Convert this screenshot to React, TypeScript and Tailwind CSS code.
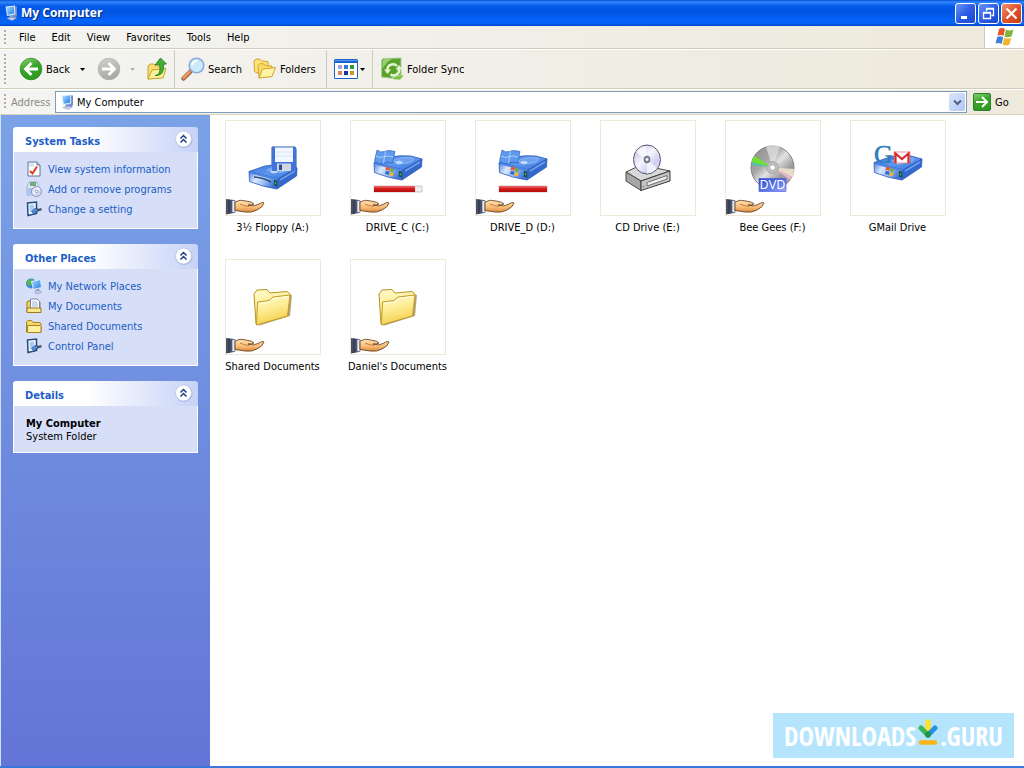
import React, { useState } from 'react';
import clsx from 'clsx';

type IconProps = { className?: string };

const menuItems = ['File', 'Edit', 'View', 'Favorites', 'Tools', 'Help'];

// Gradients shared by the drawings below
function Gradients() {
  return (
    <svg className="absolute h-0 w-0" aria-hidden="true">
      <defs>
        <linearGradient id="driveTop" x1="0" y1="0" x2="1" y2="1">
          <stop offset="0" stopColor="#3f78dc" />
          <stop offset="0.5" stopColor="#5c96ee" />
          <stop offset="1" stopColor="#3a74da" />
        </linearGradient>
        <linearGradient id="driveFront" x1="0" y1="0" x2="1" y2="0.4">
          <stop offset="0" stopColor="#4a7edc" />
          <stop offset="0.35" stopColor="#dbe8fd" />
          <stop offset="0.65" stopColor="#9cc0f6" />
          <stop offset="1" stopColor="#3f74d6" />
        </linearGradient>
        <linearGradient id="folder" x1="0" y1="0" x2="0.3" y2="1">
          <stop offset="0" stopColor="#fffbd0" />
          <stop offset="0.5" stopColor="#feee98" />
          <stop offset="1" stopColor="#f5cf4c" />
        </linearGradient>
        <linearGradient id="green" x1="0" y1="0" x2="0.4" y2="1">
          <stop offset="0" stopColor="#8fd67c" />
          <stop offset="0.5" stopColor="#3aa52c" />
          <stop offset="1" stopColor="#2f9a20" />
        </linearGradient>
        <linearGradient id="gray" x1="0" y1="0" x2="0.4" y2="1">
          <stop offset="0" stopColor="#d2d2d0" />
          <stop offset="1" stopColor="#a8a8a6" />
        </linearGradient>
        <linearGradient id="screen" x1="0" y1="0" x2="1" y2="1">
          <stop offset="0" stopColor="#a8dcff" />
          <stop offset="1" stopColor="#1f7be6" />
        </linearGradient>
        <linearGradient id="skin" x1="0" y1="0" x2="0" y2="1">
          <stop offset="0" stopColor="#ffe2b4" />
          <stop offset="0.6" stopColor="#f8bb74" />
          <stop offset="1" stopColor="#d8883a" />
        </linearGradient>
        <linearGradient id="usage" x1="0" y1="0" x2="0" y2="1">
          <stop offset="0" stopColor="#ee6c6c" />
          <stop offset="0.5" stopColor="#d01818" />
          <stop offset="1" stopColor="#b80c0c" />
        </linearGradient>
        <linearGradient id="cd" x1="0" y1="0" x2="1" y2="1">
          <stop offset="0" stopColor="#b9b9e4" />
          <stop offset="0.45" stopColor="#f6f6ff" />
          <stop offset="0.7" stopColor="#cfcff4" />
          <stop offset="1" stopColor="#e9e4fb" />
        </linearGradient>
        <linearGradient id="dvd" x1="0" y1="0" x2="1" y2="1">
          <stop offset="0" stopColor="#8c8c8c" />
          <stop offset="0.35" stopColor="#a5a5a5" />
          <stop offset="0.5" stopColor="#e2e2e2" />
          <stop offset="0.7" stopColor="#9c9c9c" />
          <stop offset="1" stopColor="#b0b0b0" />
        </linearGradient>
        <linearGradient id="dvdLabel" x1="0" y1="0" x2="1" y2="1">
          <stop offset="0" stopColor="#2f48d0" />
          <stop offset="0.6" stopColor="#5f78ea" />
          <stop offset="1" stopColor="#9cb0fa" />
        </linearGradient>
      </defs>
    </svg>
  );
}

function ComputerIcon({ className }: IconProps) {
  return (
    <svg className={className} viewBox="0 0 16 16" aria-hidden="true">
      <path d="M4 13.500 L9 11.500 L13.500 13 L9 15.500 Z" fill="#d8d4ea" stroke="#8f92bc" strokeWidth="0.600" />
      <path d="M11 1 L14 1.500 V11 L12 13 L10 12 Z" fill="#6f8cc4" />
      <path d="M6.500 10 L10 10 L10.500 13 L6.500 13.300 Z" fill="#8c9ccc" />
      <path d="M2.500 1.500 L12 0.500 L12.300 9.500 L4 11 Z" fill="#d8ebfc" />
      <path d="M3.500 2.500 L11 1.600 L11.200 8.600 L4.800 9.800 Z" fill="url(#screen)" />
    </svg>
  );
}

function WindowsFlag({ className }: IconProps) {
  return (
    <svg className={className} viewBox="0 0 20 20" aria-hidden="true">
      <path d="M4 2 Q7 0 10 2 L8.500 9 Q5.500 7 2.500 8.800 Z" fill="#e8562a" />
      <path d="M11 2.500 Q14 4.500 18.500 2.500 L16.500 9.500 Q12.500 11.200 9.500 9.400 Z" fill="#7db53c" />
      <path d="M2.200 10 Q5.200 8.200 8.200 10.200 L6.600 17 Q3.600 15 0.500 16.600 Z" fill="#3f7fd8" />
      <path d="M9.200 10.700 Q12.500 12.500 16.200 10.700 L14.500 17.500 Q11 19.300 7.600 17.500 Z" fill="#f2b62c" />
    </svg>
  );
}

function CircleArrow({ className, forward }: IconProps & { forward?: boolean }) {
  return (
    <svg className={className} viewBox="0 0 24 24" aria-hidden="true">
      <circle cx="12" cy="12" r="10.800" fill={forward ? 'url(#gray)' : 'url(#green)'} stroke={forward ? '#b0b0ae' : '#2c8a20'} strokeWidth="0.800" />
      <path
        d={forward ? 'M5 12 H17 M11.500 6 L17.500 12 L11.500 18' : 'M19 12 H7 M12.500 6 L6.500 12 L12.500 18'}
        fill="none"
        stroke="#fff"
        strokeWidth="2.800"
      />
    </svg>
  );
}

function UpFolderIcon({ className }: IconProps) {
  return (
    <svg className={className} viewBox="0 0 22 24" aria-hidden="true">
      <path d="M2 22 L2 9 L4 7 L8 7 L10 9 L17 9 L17 20 Z" fill="#f8de74" stroke="#c9a227" />
      <path d="M2 22 L6 13 L20 11.500 L17 21 Z" fill="#fdf09c" stroke="#c9a227" />
      <path d="M9 18.500 C14 18 14.500 13 13.500 7.500 L9 8 L14.500 1 L20.500 7 L17.500 7.200 C18 13 17 19 9 18.500 Z" fill="#3fb034" stroke="#1f7a1a" strokeWidth="0.800" />
    </svg>
  );
}

function SearchIcon({ className }: IconProps) {
  return (
    <svg className={className} viewBox="0 0 24 24" aria-hidden="true">
      <path d="M2.500 21.500 L9 15" stroke="#a2603a" strokeWidth="4.500" strokeLinecap="round" />
      <path d="M2.500 21 L8.500 15" stroke="#e79a62" strokeWidth="2.500" strokeLinecap="round" />
      <circle cx="15.500" cy="8.500" r="7.300" fill="#cdeafc" stroke="#8fabd8" strokeWidth="1.600" />
      <path d="M11 8 Q12 4 16 4" stroke="#fff" strokeWidth="2" fill="none" />
    </svg>
  );
}

function FoldersIcon({ className }: IconProps) {
  return (
    <svg className={className} viewBox="0 0 24 24" aria-hidden="true">
      <path d="M1.500 14.500 L1 4 L3 2 L7 2.200 L8.500 4 L15 4.500 L15 13 L4 16 Z" fill="#fbe27a" stroke="#d4a52c" />
      <path d="M6 21 L5 8.500 L7 6.500 L11 7 L12.500 8.500 L19 9 L19 19 Z" fill="#f9da66" stroke="#d4a52c" />
      <path d="M6 21 L9.500 12 L22.500 10.500 L19 19.500 Z" fill="#fdf2a6" stroke="#d4a52c" />
    </svg>
  );
}

function ViewsIcon({ className }: IconProps) {
  const dots = ['#a8a0d8', '#2c78d8', '#2f9a3c', '#e8825c', '#123c9c', '#c89a2c'];
  return (
    <svg className={className} viewBox="0 0 24 20" aria-hidden="true">
      <rect x="0" y="0" width="24" height="20" rx="1.500" fill="#1c62cc" />
      <rect x="1" y="4" width="22" height="15" fill="#fff" />
      <rect x="1" y="1" width="22" height="1" fill="#5c9cf0" />
      {dots.map((fill, i) => (
        <rect key={fill} x={4 + (i % 3) * 6} y={i < 3 ? 6 : 12} width="4" height="4" fill={fill} />
      ))}
    </svg>
  );
}

function FolderSyncIcon({ className }: IconProps) {
  return (
    <svg className={className} viewBox="0 0 24 24" aria-hidden="true">
      <path d="M3 1.500 L21 1 V20 L19 22 L1.500 20 V4 Z" fill="#57a428" stroke="#a9cc98" />
      <path d="M4 2 H12 Q6 5 2.500 12 V4 Z" fill="#9ccf70" />
      <path d="M7.500 13 A5.500 5.500 0 0 1 17 9" fill="none" stroke="#e4f4d6" strokeWidth="2.500" />
      <path d="M19 12 A5.500 5.500 0 0 1 10.500 17.500" fill="none" stroke="#e4f4d6" strokeWidth="2.500" />
      <path d="M4 12.500 H11 L7.500 17 Z M15.500 12.500 H22.500 L19 8 Z" fill="#e4f4d6" />
      <path d="M13 20 L22 17.500 L23.500 19 L20 23 L13 22.500 Z" fill="#7fc04c" stroke="#dff0d2" strokeWidth="0.700" />
    </svg>
  );
}

function Caret({ className }: IconProps) {
  return (
    <svg className={clsx('h-[3px] w-[5px]', className)} viewBox="0 0 5 3" aria-hidden="true">
      <path d="M0 0 H5 L2.500 3 Z" fill="currentColor" />
    </svg>
  );
}

function CollapseIcon() {
  return (
    <svg className="h-[19px] w-[19px]" viewBox="0 0 19 19" aria-hidden="true">
      <circle cx="10" cy="9.500" r="8.500" fill="#a4b0d8" />
      <circle cx="9.500" cy="9" r="8" fill="#fff" stroke="#c3cce8" />
      <path d="M6.500 8.500 L9.500 5.500 L12.500 8.500 M6.500 12.500 L9.500 9.500 L12.500 12.500" fill="none" stroke="#1a3e8c" strokeWidth="1.500" />
    </svg>
  );
}

function SystemInfoIcon({ className }: IconProps) {
  return (
    <svg className={className} viewBox="0 0 16 16" aria-hidden="true">
      <path d="M2 1 H11 L14 4 V15 H2 Z" fill="#fff" stroke="#5f7298" />
      <path d="M11 1 V4 H14" fill="#c8d4ea" stroke="#5f7298" />
      <path d="M4 10 L6.500 12.500 L11 5.500" fill="none" stroke="#dc3c1c" strokeWidth="2" />
      <path d="M3 3 H8 M3 5 H8" stroke="#b8c8e4" />
    </svg>
  );
}

function ProgramsIcon({ className }: IconProps) {
  return (
    <svg className={className} viewBox="0 0 16 16" aria-hidden="true">
      <path d="M1 6 L3 1 H11 L13 6 V14 H1 Z" fill="#dfe9f8" stroke="#8ba0c4" strokeWidth="0.800" />
      <rect x="4" y="1" width="6" height="4" fill="#6faa7c" />
      <rect x="2" y="7" width="6" height="6" fill="#a9c4ee" />
      <circle cx="10.500" cy="10.500" r="5" fill="url(#cd)" stroke="#7f86b0" strokeWidth="0.800" />
      <circle cx="10.500" cy="10.500" r="1.300" fill="#fff" stroke="#7f86b0" strokeWidth="0.800" />
    </svg>
  );
}

function SettingIcon({ className }: IconProps) {
  return (
    <svg className={className} viewBox="0 0 16 16" aria-hidden="true">
      <path d="M1.500 2 L10.500 1 V12.500 L2 14.500 Z" fill="#eef4fe" stroke="#274a80" strokeWidth="1.500" />
      <path d="M3.500 4 L8 3.500 V9 L4 11 Z" fill="#a8ccf6" />
      <path d="M5.500 10.500 L9 7.500 L12 8 V10.500 L10 11 L8.500 13.500 Z" fill="#4a90dc" stroke="#1f3c6c" strokeWidth="0.600" />
      <path d="M11 8 L15.500 7 V9.500 L11 10.500 Z" fill="#4a5468" />
    </svg>
  );
}

function NetworkIcon({ className }: IconProps) {
  return (
    <svg className={className} viewBox="0 0 16 16" aria-hidden="true">
      <circle cx="5" cy="5.500" r="5" fill="#3d86dc" />
      <path d="M1 3 Q4 0 7 1.500 L5 4 L6 7 L3 8 L1 6 Z" fill="#4fb848" />
      <path d="M5.500 3.500 L14.500 1.500 L15.500 9.500 L7.500 11.500 Z" fill="url(#screen)" stroke="#dce8f8" />
      <path d="M10 11.500 L13 10.500 L13.500 13 L10.500 13.500 Z" fill="#8c98c4" />
      <ellipse cx="12" cy="14" rx="3.500" ry="1.500" fill="#c8cce8" stroke="#7b84b4" strokeWidth="0.500" />
    </svg>
  );
}

function MyDocumentsIcon({ className }: IconProps) {
  return (
    <svg className={className} viewBox="0 0 16 16" aria-hidden="true">
      <path d="M1 14 V4 L2 3 H6 L14 4 V14 Z" fill="#f4d260" stroke="#9a7a1c" />
      <path d="M4.500 1 H11 L13.500 3.500 V12 H4.500 Z" fill="#fff" stroke="#7088b0" />
      <path d="M6 4 H11 M6 6 H12 M6 8 H12" stroke="#9cb4d8" />
      <path d="M1 14.500 V10 H15 V14.500 Z" fill="#fae78e" stroke="#9a7a1c" />
    </svg>
  );
}

function SmallFolderIcon({ className }: IconProps) {
  return (
    <svg className={className} viewBox="0 0 16 16" aria-hidden="true">
      <path d="M0.500 14 V4 L2 2.500 H5.500 L7 4.500 H14 L15 6 V14 Z" fill="#f6d868" stroke="#a8841c" />
      <path d="M1.500 14.500 V7.500 H14 L15 8.500 V14.500 Z" fill="#fdf09c" stroke="#a8841c" />
    </svg>
  );
}

// Blue external drive, drawn in the lower half of a 48px square
function DriveBody({ logo }: { logo?: boolean }) {
  return (
    <g>
      <path d="M0 18.500 L16 13 Q26 11 37 12 L48 15 L29 26 Z" fill="url(#driveTop)" stroke="#2a5cba" strokeWidth="0.800" />
      <path d="M18 17 Q27 12 39 14 Q41 17 34 19 Q25 21 18 17 Z" fill="#6ea2f0" stroke="#9cc2f8" strokeWidth="0.700" />
      <ellipse cx="25" cy="18.500" rx="3.500" ry="1.800" fill="#bcd8fb" />
      <path d="M0 18.500 L29 26 L28 36 Q14 34 0.500 28.500 Z" fill="url(#driveFront)" stroke="#2a5cba" strokeWidth="0.800" />
      <path d="M1 19.500 L28.500 26.500" stroke="#4f86e6" strokeWidth="2" />
      <path d="M29 26 L48 15 L47.500 23 L28 36 Z" fill="#3468cc" stroke="#2a5cba" strokeWidth="0.800" />
      <path d="M31 27 L46 18" stroke="#6f9fee" strokeWidth="1.500" />
      <path d="M25 27 L28 27.800 V33.500 L25 32.500 Z" fill="#1c4a3c" />
      <rect x="25.800" y="29" width="1.400" height="2.500" fill="#3fae58" />
      {logo && (
        <g>
          <path d="M12 23.500 Q14 22 16 23.800 L15.500 27 Q13.500 25.500 11.500 26.500 Z" fill="#e8562a" />
          <path d="M16.500 24.100 Q18.500 25.500 20 24.500 L19.500 27.500 Q17.500 28.500 16 27.300 Z" fill="#6cae3c" />
          <path d="M11.500 27.500 Q13.500 26.300 15.400 27.800 L15 31 Q13 29.600 11 30.500 Z" fill="#3468d0" />
          <path d="M16 28.100 Q17.500 29.500 19.500 28.500 L19 31.800 Q17 32.800 15.500 31.400 Z" fill="#f2b62c" />
        </g>
      )}
    </g>
  );
}

function FloppyDriveIcon() {
  return (
    <>
      <path d="M23 3 H46 L47 5 V30 H23 Z" fill="#3f74da" stroke="#24509e" />
      <g transform="translate(0 9)">
        <DriveBody />
      </g>
      <path d="M23 3 H46 L47 5 V27 H23 Z" fill="#3f74da" />
      <rect x="26" y="3.500" width="18" height="14.500" fill="#f2f7ff" />
      <path d="M26 8 H44 M26 12 H44" stroke="#d8e6fa" />
      <rect x="28" y="19.500" width="14" height="7.500" fill="#d0d6e2" />
      <rect x="30" y="20.500" width="3" height="5.500" fill="#2c4f9c" />
      <path d="M5 33 Q14 33.500 22 38" stroke="#33507c" strokeWidth="1.600" fill="none" />
    </>
  );
}

function HardDriveIcon({ full }: { full?: boolean }) {
  return (
    <>
      <DriveBody logo />
      <path d="M3 6 Q7 9 10 7.500 Q14 5.500 21 7.500 L18.500 19 Q13 17 9 19.500 Q5 21 0.500 17 Z" fill="#5e9aee" stroke="#2c62b8" strokeWidth="0.700" />
      <path d="M11.500 7 L9.500 19.500 M2 12 Q6 14.500 9 13 Q13 11 19.500 13" stroke="#b4d2fa" strokeWidth="0.900" fill="none" />
      <rect x="0" y="42" width="48" height="6" fill="#f0eef0" stroke="#a8a8a8" strokeWidth="0.600" />
      <rect x="0" y="42" width={full ? 48 : 41} height="6" fill="url(#usage)" />
    </>
  );
}

function CdDriveIcon() {
  return (
    <>
      <path d="M2 28 L17 21 L46 27 L17 37 Z" fill="#d9d9d9" stroke="#4a4a4a" />
      <path d="M2 28 L17 37 V46.500 L2 37 Z" fill="#a6a6a6" stroke="#4a4a4a" />
      <path d="M17 37 L46 27 V37 L17 46.500 Z" fill="#c4c4c4" stroke="#3a3a3a" />
      <path d="M23 38.500 L43 31.500 V35 L23 42 Z" fill="#f0f0f0" stroke="#555" strokeWidth="0.800" />
      <circle cx="19.500" cy="42.500" r="0.800" fill="#3c9a3c" />
      <ellipse cx="23" cy="15.500" rx="13.500" ry="14.500" fill="url(#cd)" stroke="#55556a" />
      <path d="M23 15.500 L12 8 Q16 2 22 2 Z" fill="#fff" opacity="0.700" />
      <path d="M23 15.500 L33 24 Q29 29 23 29.500 Z" fill="#fff" opacity="0.700" />
      <ellipse cx="23" cy="15.500" rx="3" ry="3.500" fill="#8c8c9c" stroke="#55556a" strokeWidth="0.700" />
      <circle cx="23" cy="15.500" r="1.300" fill="#fff" />
    </>
  );
}

function DvdIcon() {
  return (
    <>
      <circle cx="23.500" cy="23.500" r="21.500" fill="url(#dvd)" stroke="#6c6c6c" strokeWidth="0.800" />
      <path d="M23.500 23.500 L3 18 Q3.500 14 5.500 12 Z" fill="#6fe22c" />
      <path d="M23.500 23.500 L2.500 21 L3 18 Z" fill="#4fc4a4" />
      <path d="M23.500 23.500 L17 3 Q24 0 31 3 Z" fill="#e6e6e6" opacity="0.700" />
      <path d="M23.500 23.500 L45 25 Q45 30 43 33 Z" fill="#e8dcc8" />
      <path d="M23.500 23.500 L43 33 L41 36 Z" fill="#e6b4c8" />
      <circle cx="23.500" cy="23.500" r="6" fill="#c0c0c0" stroke="#8a8a8a" strokeWidth="0.600" />
      <circle cx="23.500" cy="23.500" r="2.800" fill="#fff" stroke="#8a8a8a" strokeWidth="0.600" />
      <rect x="10" y="34.500" width="27" height="13" fill="url(#dvdLabel)" stroke="#3c54d8" strokeWidth="0.600" />
      <text x="23.500" y="45" textAnchor="middle" fill="#fff" className="font-['Liberation_Sans',sans-serif] text-[12px]">
        DVD
      </text>
    </>
  );
}

function GmailDriveIcon() {
  return (
    <>
      <DriveBody logo />
      <text x="0" y="19" fill="#2f7dbb" stroke="#2f7dbb" strokeWidth="0.600" className="font-['Liberation_Serif',serif] text-[26px]">
        G
      </text>
      <rect x="20" y="8" width="16" height="11" fill="#fff" stroke="#d8262c" strokeWidth="0.500" />
      <polyline points="21.500,19 21.500,9.500 28,15 34.500,9.500 34.500,19" fill="none" stroke="#d8262c" strokeWidth="2.200" />
    </>
  );
}

function LargeFolderIcon() {
  return (
    <>
      <path d="M9 43 L41 33 L43 12 L40 12 Z" fill="#7a6a30" opacity="0.600" />
      <path d="M7 41 L5 11 L8 7 L18 6.500 L21 10 L38 8.500 L41 11 L39 32 Z" fill="url(#folder)" stroke="#b89220" />
      <path d="M7.500 42 L8.500 19 L20 17.500 L24 14 L41 12 L38.500 33 Z" fill="url(#folder)" stroke="#c49c26" />
      <path d="M10 20.500 L20.500 19 L24.500 15.500 L39.500 13.500" fill="none" stroke="#fffde6" />
    </>
  );
}

function SharedHand() {
  return (
    <svg className="absolute bottom-0 left-0 h-[17px] w-[39px]" viewBox="0 0 39 17" aria-hidden="true">
      <path d="M0 1 L8 2 V15 L0 16.500 Z" fill="#4a5166" />
      <path d="M3 1.500 V16" stroke="#2b3142" />
      <path d="M6 2.500 H9 V14.500 H6 Z" fill="#e8ecf4" stroke="#55607c" strokeWidth="0.700" />
      <path d="M9 4 Q14 1 20 3 Q27 4 28 6 Q25 7.500 22 7 Q28 9 32 6.500 Q37 3.500 38 5 Q37 9 31 12 Q26 15 19 14 L9 12.500 Z" fill="url(#skin)" stroke="#5c3618" strokeWidth="0.800" />
      <path d="M14 6 Q18 8 23 8.500" stroke="#b4702c" strokeWidth="0.800" fill="none" />
    </svg>
  );
}

const drives = [
  { name: '3½ Floppy (A:)', icon: <FloppyDriveIcon />, shared: true },
  { name: 'DRIVE_C (C:)', icon: <HardDriveIcon />, shared: true },
  { name: 'DRIVE_D (D:)', icon: <HardDriveIcon full />, shared: true },
  { name: 'CD Drive (E:)', icon: <CdDriveIcon />, shared: false },
  { name: 'Bee Gees (F:)', icon: <DvdIcon />, shared: true },
  { name: 'GMail Drive', icon: <GmailDriveIcon />, shared: false },
  { name: 'Shared Documents', icon: <LargeFolderIcon />, shared: true },
  { name: "Daniel's Documents", icon: <LargeFolderIcon />, shared: true },
];

const systemTasks = [
  { label: 'View system information', Icon: SystemInfoIcon },
  { label: 'Add or remove programs', Icon: ProgramsIcon },
  { label: 'Change a setting', Icon: SettingIcon },
];

const otherPlaces = [
  { label: 'My Network Places', Icon: NetworkIcon },
  { label: 'My Documents', Icon: MyDocumentsIcon },
  { label: 'Shared Documents', Icon: SmallFolderIcon },
  { label: 'Control Panel', Icon: SettingIcon },
];

function Grip() {
  return <div className="my-1 ml-1 w-[2px] self-stretch bg-[repeating-linear-gradient(to_bottom,#b4b1a4_0_2px,transparent_2px_4px)]" />;
}

function Separator() {
  return <div className="w-px self-stretch bg-[#cdcabb]" />;
}

function Panel({ title, children }: { title: string; children: React.ReactNode }) {
  const [open, setOpen] = useState(true);

  return (
    <section>
      <header className="flex h-[25px] items-center justify-between rounded-t-[3px] bg-gradient-to-r from-white from-40% to-[#c6d3f7] pr-[5px] pl-3">
        <h2 className="pt-1 font-bold text-[#215dc6]">{title}</h2>
        <button aria-label={`Collapse ${title}`} onClick={() => setOpen(!open)}>
          <CollapseIcon />
        </button>
      </header>
      {open && <div className="border border-t-0 border-white bg-[#d6dff7]">{children}</div>}
    </section>
  );
}

function LinkList({ items }: { items: { label: string; Icon: (p: IconProps) => React.ReactNode }[] }) {
  return (
    <ul className="px-3 pt-[7px] pb-[9px]">
      {items.map(({ label, Icon }) => (
        <li key={label}>
          <a href="#" className="flex h-5 items-center gap-[6px] whitespace-nowrap text-[#215dc6] hover:underline">
            <Icon className="h-4 w-4 shrink-0" />
            {label}
          </a>
        </li>
      ))}
    </ul>
  );
}

function TitleButton({ label, close, children }: { label: string; close?: boolean; children: React.ReactNode }) {
  return (
    <button
      aria-label={label}
      className={clsx(
        'flex h-[21px] w-[21px] items-center justify-center rounded-[3px] border border-white',
        close
          ? 'bg-gradient-to-br from-[#f0906c] via-[#e0522c] to-[#c83c14]'
          : 'bg-gradient-to-br from-[#6c94f4] via-[#2c5ce4] to-[#1c48cc]'
      )}
    >
      <svg className="h-[15px] w-[15px]" viewBox="0 0 15 15" fill="none" stroke="#fff" aria-hidden="true">
        {children}
      </svg>
    </button>
  );
}

export default function App() {
  const [address, setAddress] = useState('My Computer');

  return (
    <div className="flex min-h-screen flex-col border-b-2 border-[#3a78dc] bg-white font-['Tahoma','DejaVu_Sans_Condensed','Noto_Sans',sans-serif] text-[11px] leading-[13px] text-black">
      <Gradients />

      {/* Title bar */}
      <header className="flex h-[26px] items-center bg-[linear-gradient(to_bottom,#0a50d8_0%,#2f86fc_8%,#0458e8_24%,#0256e4_50%,#0664fc_80%,#0462f6_90%,#0244c4_100%)] pr-[2px] pl-[3px]">
        <ComputerIcon className="h-4 w-4" />
        <h1 className="flex-1 pl-[2px] font-['Trebuchet_MS','Open_Sans',sans-serif] text-[12px] leading-4 font-bold text-white [text-shadow:1px_1px_1px_#0a2c80]">
          My Computer
        </h1>
        <div className="flex gap-[2px]">
          <TitleButton label="Minimize">
            <path d="M3 11.500 H9" strokeWidth="3" />
          </TitleButton>
          <TitleButton label="Restore">
            <path d="M5.500 5 V2.500 H12.500 V9.500 H10.500 M5 3 H13" strokeWidth="1.300" />
            <path d="M2.500 6.500 H9.500 V12.500 H2.500 Z M2 7 H10" strokeWidth="1.300" />
          </TitleButton>
          <TitleButton label="Close" close>
            <path d="M2.500 2.500 L12.500 12.500 M12.500 2.500 L2.500 12.500" strokeWidth="2.200" />
          </TitleButton>
        </div>
      </header>

      {/* Menu bar */}
      <nav className="flex h-[23px] items-center border-b border-[#d0ccbc] bg-gradient-to-r from-[#f4f4f2] to-[#ede9db]">
        <Grip />
        <div className="flex flex-1 pl-[5px]">
          {menuItems.map((item) => (
            <button key={item} className="px-2 hover:bg-[#316ac5] hover:text-white">
              {item}
            </button>
          ))}
        </div>
        <div className="flex w-10 items-center justify-center self-stretch border-l border-[#cfccbd] bg-white">
          <WindowsFlag className="h-5 w-5" />
        </div>
      </nav>

      {/* Standard buttons */}
      <div className="flex h-10 items-center border-t border-b border-t-white border-b-[#d0ccbc] bg-gradient-to-r from-[#f4f4f2] to-[#ede9db] whitespace-nowrap">
        <Grip />
        <button className="ml-[13px] flex w-[66px] items-center gap-[3px]">
          <CircleArrow className="h-6 w-6 shrink-0" />
          Back
          <Caret className="ml-auto" />
        </button>
        <button className="ml-3 flex w-[38px] items-center justify-between" disabled>
          <CircleArrow className="h-6 w-6" forward />
          <Caret className="text-[#b4b2a8]" />
        </button>
        <button className="mr-[6px] ml-[11px]" aria-label="Up">
          <UpFolderIcon className="h-6 w-[22px]" />
        </button>
        <Separator />
        <button className="ml-[6px] flex w-[66px] items-center gap-[3px]">
          <SearchIcon className="h-6 w-6 shrink-0" />
          Search
        </button>
        <button className="mr-[5px] ml-[6px] flex w-[68px] items-center gap-[3px]">
          <FoldersIcon className="h-6 w-6 shrink-0" />
          Folders
        </button>
        <Separator />
        <button className="mr-[7px] ml-[7px] flex w-[31px] items-center justify-between" aria-label="Views">
          <ViewsIcon className="h-5 w-6" />
          <Caret />
        </button>
        <Separator />
        <button className="ml-[7px] flex items-center gap-[3px]">
          <FolderSyncIcon className="h-6 w-6" />
          Folder Sync
        </button>
      </div>

      {/* Address bar */}
      <form
        className="flex h-[26px] items-center border-t border-b border-t-white border-b-[#d8d4bc] bg-gradient-to-r from-[#f4f4f2] to-[#ede9db]"
        onSubmit={(e) => e.preventDefault()}
      >
        <Grip />
        <label htmlFor="address" className="w-[49px] pl-[5px] text-[#8c8a80]">
          Address
        </label>
        <div className="flex h-[22px] flex-1 items-center border border-[#7f9db9] bg-white pl-[3px]">
          <ComputerIcon className="h-4 w-4 shrink-0" />
          <input
            id="address"
            value={address}
            onChange={(e) => setAddress(e.target.value)}
            className="min-w-0 flex-1 pl-[2px] outline-none"
          />
          <button
            type="button"
            aria-label="Show addresses"
            className="mr-px flex h-[18px] w-4 items-center justify-center rounded-[2px] bg-gradient-to-br from-[#dce6fd] to-[#b0c6f4]"
          >
            <svg className="h-[9px] w-[9px]" viewBox="0 0 9 9" fill="none" stroke="#4d6185" strokeWidth="2" aria-hidden="true">
              <path d="M1 2.500 L4.500 6 L8 2.500" />
            </svg>
          </button>
        </div>
        <button className="flex w-[57px] items-center gap-1 pl-[6px]">
          <svg className="h-[18px] w-[18px]" viewBox="0 0 18 18" aria-hidden="true">
            <rect x="0.500" y="0.500" width="17" height="17" rx="1.500" fill="url(#green)" stroke="#2c7c34" />
            <path d="M3 9 H14 M9 4 L14 9 L9 14" fill="none" stroke="#fff" strokeWidth="2" />
          </svg>
          Go
        </button>
      </form>

      {/* Body */}
      <div className="flex flex-1">
        <aside className="flex w-[210px] shrink-0 flex-col gap-[15px] border-l border-[#d4e0fa] bg-gradient-to-b from-[#7ba2e7] to-[#6375d6] px-3 pt-3">
          <Panel title="System Tasks">
            <LinkList items={systemTasks} />
          </Panel>
          <Panel title="Other Places">
            <LinkList items={otherPlaces} />
          </Panel>
          <Panel title="Details">
            <div className="px-3 pt-[11px] pb-[9px]">
              <p className="font-bold">My Computer</p>
              <p>System Folder</p>
            </div>
          </Panel>
        </aside>

        <main className="flex-1">
          <ul className="grid grid-cols-[repeat(auto-fill,125px)] gap-y-6 pt-[5px]">
            {drives.map((drive) => (
              <li key={drive.name} className="flex flex-col items-center gap-[5px] whitespace-nowrap">
                <div className="relative flex h-24 w-24 items-center justify-center border border-[#ece9d8]">
                  <svg className="h-12 w-12 overflow-visible" viewBox="0 0 48 48" aria-hidden="true">
                    {drive.icon}
                  </svg>
                  {drive.shared && <SharedHand />}
                </div>
                <span className="h-[14px]">{drive.name}</span>
              </li>
            ))}
          </ul>
        </main>
      </div>

      {/* Download badge */}
      <a
        href="#"
        className="absolute right-[10px] bottom-[10px] flex h-[45px] w-[241px] items-center justify-center bg-[#b5e5fd] font-['Open_Sans_Condensed','Liberation_Sans_Narrow','Open_Sans',sans-serif] text-[26px] leading-7 font-bold text-white"
      >
        DOWNLOADS
        <svg className="mx-[2px] h-[26px] w-5 -translate-y-1" viewBox="0 0 20 26" aria-hidden="true">
          <path d="M10 3 V14" stroke="#fde32c" strokeWidth="5.500" strokeLinecap="round" />
          <path d="M3 9 L10 16" stroke="#3cb45c" strokeWidth="5" strokeLinecap="round" />
          <path d="M17 9 L10 16" stroke="#2490e0" strokeWidth="5" strokeLinecap="round" />
          <circle cx="10" cy="15.500" r="3" fill="#1f9450" />
          <path d="M3 23.500 H17" stroke="#fbb416" strokeWidth="4.500" strokeLinecap="round" />
        </svg>
        .GURU
      </a>
    </div>
  );
}
